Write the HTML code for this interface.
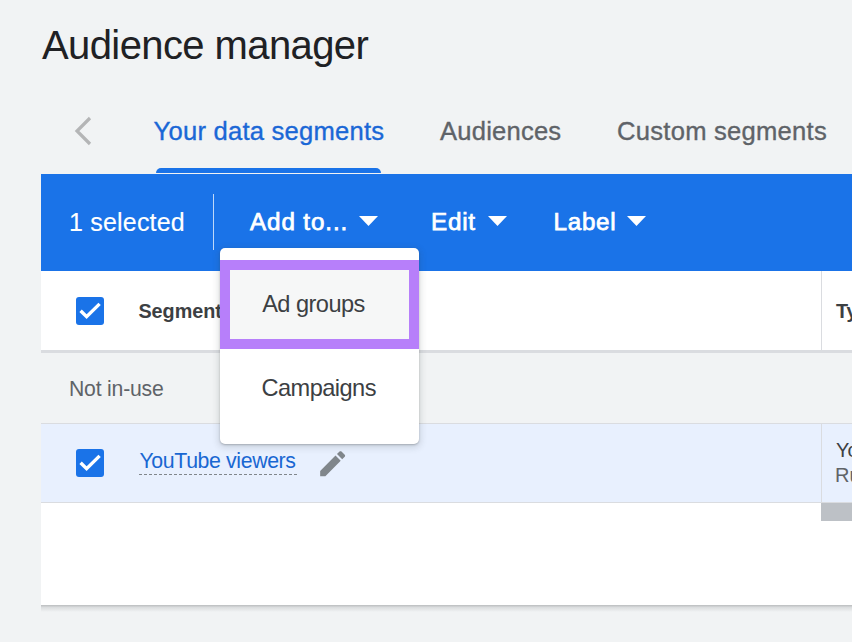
<!DOCTYPE html>
<html><head><meta charset="utf-8">
<style>
*{margin:0;padding:0;box-sizing:border-box}
html,body{width:852px;height:642px;overflow:hidden;background:#f1f3f4;font-family:"Liberation Sans",sans-serif;position:relative}
.abs{position:absolute;white-space:nowrap}
.t{line-height:1}
</style></head><body>
<!-- title -->
<div class="abs t" id="title" style="left:42px;top:25px;font-size:40px;letter-spacing:-0.6px;color:#202124">Audience manager</div>
<!-- tabs -->
<svg class="abs" style="left:70px;top:112px" width="30" height="38" viewBox="0 0 30 38"><polyline points="20,6 7,19 20,32" fill="none" stroke="#b4b5b6" stroke-width="3.2"/></svg>
<div class="abs t" id="tab1" style="left:153.6px;top:118.5px;font-size:25.6px;letter-spacing:0.22px;color:#1a67d6;-webkit-text-stroke:0.35px #1a67d6">Your data segments</div>
<div class="abs t" id="tab2" style="left:440px;top:118.8px;font-size:25.6px;letter-spacing:0.2px;color:#5f6368;-webkit-text-stroke:0.35px #5f6368">Audiences</div>
<div class="abs t" id="tab3" style="left:617.1px;top:118.8px;font-size:25.6px;letter-spacing:0.24px;color:#5f6368;-webkit-text-stroke:0.35px #5f6368">Custom segments</div>
<div class="abs" style="left:156px;top:168px;width:225px;height:5px;background:#1a73e8;border-radius:5px 5px 0 0"></div>
<!-- card -->
<div class="abs" style="left:41px;top:174px;width:811px;height:431px;background:#fff"></div>
<div class="abs" style="left:41px;top:605px;width:811px;height:7px;background:linear-gradient(rgba(60,64,67,.30),rgba(60,64,67,.12) 35%,rgba(60,64,67,0))"></div>
<!-- blue toolbar -->
<div class="abs" style="left:41px;top:174px;width:811px;height:97px;background:#1a73e8"></div>
<div class="abs t" id="sel" style="left:69px;top:210.1px;font-size:25px;letter-spacing:0.2px;-webkit-text-stroke:0.15px #fff;color:#fff">1 selected</div>
<div class="abs" style="left:213px;top:194px;width:1px;height:56px;background:rgba(255,255,255,.72)"></div>
<div class="abs t" id="add" style="left:250px;top:210px;font-size:24.2px;letter-spacing:0.9px;-webkit-text-stroke:0.75px #fff;color:#fff">Add to...</div>
<svg class="abs" style="left:359px;top:216px" width="19" height="10"><polygon points="0,0 19,0 9.5,10" fill="#fff"/></svg>
<div class="abs t" id="edit" style="left:431px;top:210px;font-size:24.2px;letter-spacing:0.8px;-webkit-text-stroke:0.75px #fff;color:#fff">Edit</div>
<svg class="abs" style="left:488px;top:216px" width="19" height="10"><polygon points="0,0 19,0 9.5,10" fill="#fff"/></svg>
<div class="abs t" id="label" style="left:553.5px;top:210px;font-size:24.2px;letter-spacing:0.75px;-webkit-text-stroke:0.75px #fff;color:#fff">Label</div>
<svg class="abs" style="left:627px;top:216px" width="19" height="10"><polygon points="0,0 19,0 9.5,10" fill="#fff"/></svg>
<!-- header row -->
<div class="abs" style="left:41px;top:350px;width:811px;height:3px;background:#dadce0"></div>
<div class="abs" style="left:821px;top:271px;width:1px;height:79px;background:#dadce0"></div>
<div class="abs" style="left:76px;top:297px;width:28px;height:28px;background:#1a73e8;border-radius:3px"></div>
<svg class="abs" style="left:76px;top:297px" width="28" height="28"><polyline points="4.6,13.7 10.6,19.6 23.6,6.9" fill="none" stroke="#fff" stroke-width="3.4"/></svg>
<div class="abs t" id="seg" style="left:138.4px;top:301.5px;font-size:19.8px;font-weight:700;color:#3c4043">Segment</div>
<div class="abs t" id="ty" style="left:836px;top:301.5px;font-size:19.8px;font-weight:700;color:#3c4043">Type</div>
<!-- not in use row -->
<div class="abs" style="left:41px;top:353px;width:811px;height:70px;background:#f1f3f4"></div>
<div class="abs t" id="niu" style="left:69px;top:377.6px;font-size:21.2px;letter-spacing:-0.2px;color:#5f6368">Not in-use</div>
<!-- youtube row -->
<div class="abs" style="left:41px;top:423px;width:811px;height:80px;background:#e8f0fe;border-top:1px solid #dadce0;border-bottom:1px solid #dadce0"></div>
<div class="abs" style="left:821px;top:424px;width:1px;height:78px;background:#dadce0"></div>
<div class="abs" style="left:76px;top:449px;width:28px;height:28px;background:#1a73e8;border-radius:3px"></div>
<svg class="abs" style="left:76px;top:449px" width="28" height="28"><polyline points="4.6,13.7 10.6,19.6 23.6,6.9" fill="none" stroke="#fff" stroke-width="3.4"/></svg>
<div class="abs t" id="yt" style="left:139.5px;top:451px;font-size:21.3px;letter-spacing:-0.38px;color:#1967d2">YouTube viewers</div>
<div class="abs" style="left:139px;top:474px;width:158px;height:1px;background:repeating-linear-gradient(90deg,#80868b 0 3px,transparent 3px 5px)"></div>
<svg class="abs" style="left:316px;top:447px" width="33.3" height="33.3" viewBox="0 0 24 24"><path fill="#80868b" d="M3 17.25V21h3.75L17.81 9.94l-3.75-3.75L3 17.25zM20.71 7.04c.39-.39.39-1.02 0-1.41l-2.34-2.34c-.39-.39-1.02-.39-1.41 0l-1.83 1.83 3.75 3.75 1.83-1.83z"/></svg>
<div class="abs t" id="yo" style="left:836px;top:440px;font-size:20px;color:#3c4043">YouTube</div>
<div class="abs t" id="ru" style="left:835px;top:465px;font-size:20px;color:#5f6368">Rule</div>
<div class="abs" style="left:821px;top:503px;width:31px;height:18px;background:#bdc1c6"></div>
<!-- dropdown -->
<div class="abs" style="left:220px;top:248px;width:199px;height:196px;background:#fff;border-radius:5px;box-shadow:0 2px 6px 2px rgba(60,64,67,.15),0 1px 2px rgba(60,64,67,.3)"></div>
<div class="abs" style="left:220px;top:260px;width:199px;height:89px;background:#f6f7f7;border:10px solid #b77ffa"></div>
<div class="abs t" id="adg" style="left:262.2px;top:293px;font-size:23.6px;letter-spacing:-0.55px;color:#3c4043">Ad groups</div>
<div class="abs t" id="camp" style="left:261.5px;top:377px;font-size:23.6px;letter-spacing:-0.55px;color:#3c4043">Campaigns</div>
</body></html>
